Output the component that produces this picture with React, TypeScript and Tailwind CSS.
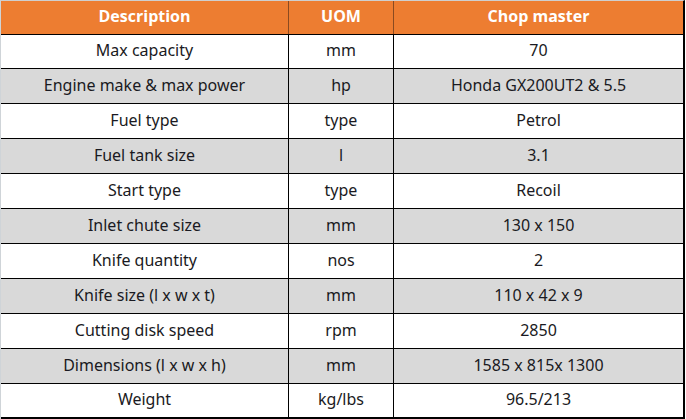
import React from "react";

const rows: [string, string, string][] = [
  ["Max capacity", "mm", "70"],
  ["Engine make & max power", "hp", "Honda GX200UT2 & 5.5"],
  ["Fuel type", "type", "Petrol"],
  ["Fuel tank size", "l", "3.1"],
  ["Start type", "type", "Recoil"],
  ["Inlet chute size", "mm", "130 x 150"],
  ["Knife quantity", "nos", "2"],
  ["Knife size (l x w x t)", "mm", "110 x 42 x 9"],
  ["Cutting disk speed", "rpm", "2850"],
  ["Dimensions (l x w x h)", "mm", "1585 x 815x 1300"],
  ["Weight", "kg/lbs", "96.5/213"],
];

export default function App() {
  return (
    <div className="w-[686px] h-[419px] bg-white overflow-hidden">
      <div
        className="w-[685px] border-l border-t border-l-[#cfd4d8] border-t-[#cfcfcf] border-r-2 border-r-black text-[16px] leading-[20px] text-[#1a1a22]"
        style={{ fontFamily: '"Noto Sans", "Liberation Sans", sans-serif' }}
      >
        <div
          className="flex h-[34px] bg-[#ED7D31] border-b border-black text-white font-bold"
          style={{ fontFamily: '"Open Sans", "Liberation Sans", sans-serif' }}
        >
          <div className="w-[288px] flex items-center justify-center pb-[3px] border-r border-[#8a4a20]">Description</div>
          <div className="w-[105px] flex items-center justify-center pb-[3px] border-r border-[#8a4a20]">UOM</div>
          <div className="flex-1 flex items-center justify-center pb-[3px]">Chop master</div>
        </div>
        {rows.map((r, i) => (
          <div
            key={i}
            className={`flex border-b border-black ${i === 0 ? "h-[34px]" : "h-[35px]"} ${i % 2 === 1 ? "bg-[#D9D9D9]" : "bg-white"} ${i === rows.length - 1 ? "border-b-2" : ""}`}
          >
            <div className="w-[288px] flex items-center justify-center pb-[3px] border-r border-black">{r[0]}</div>
            <div className="w-[105px] flex items-center justify-center pb-[3px] border-r border-black">{r[1]}</div>
            <div className="flex-1 flex items-center justify-center pb-[3px]">{r[2]}</div>
          </div>
        ))}
      </div>
    </div>
  );
}
